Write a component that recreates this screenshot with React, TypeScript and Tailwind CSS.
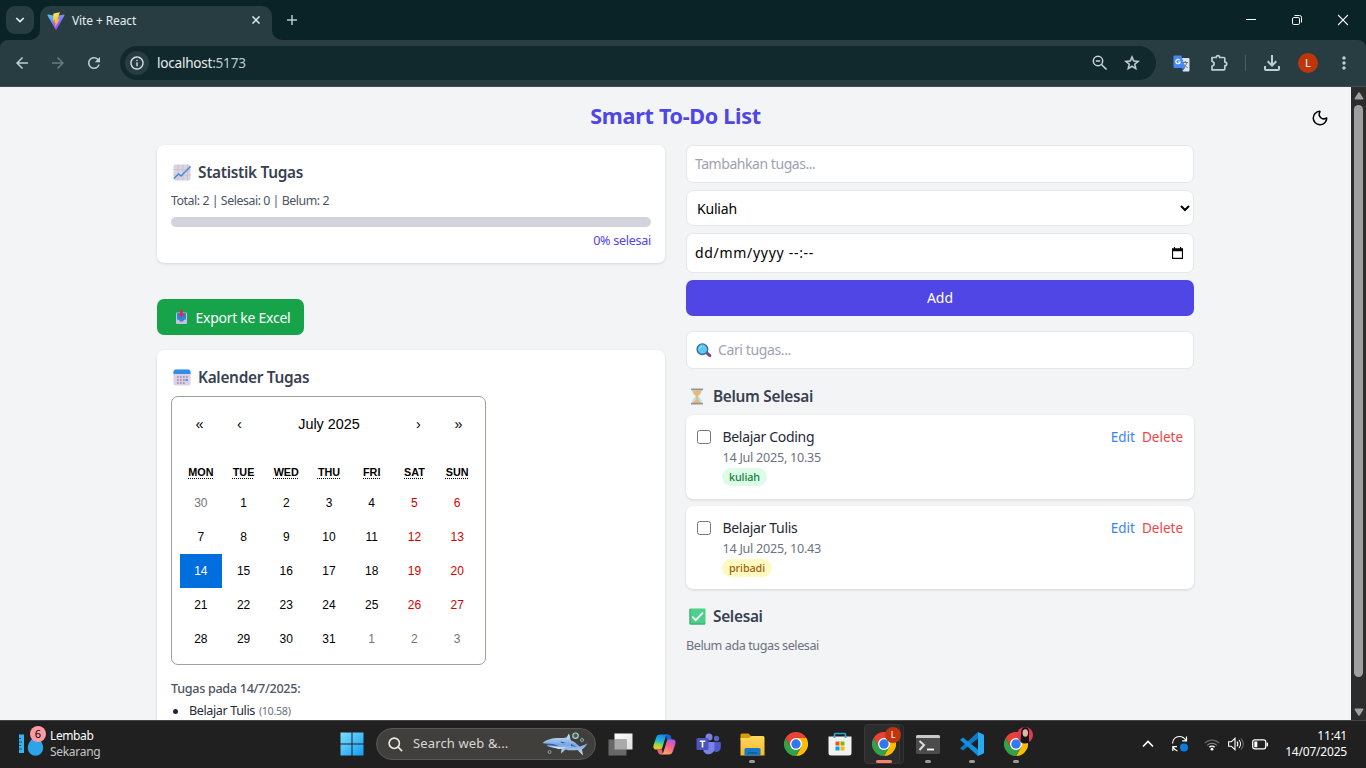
import React from "react";
import { Moon } from "lucide-react";
import {
  MdArrowBack,
  MdArrowForward,
  MdRefresh,
  MdInfoOutline,
  MdStarOutline,
  MdOutlineFileDownload,
  MdMoreVert,
} from "react-icons/md";

type Task = { title: string; when: string; tag: string; tagClass: string };

const tasks: Task[] = [
  { title: "Belajar Coding", when: "14 Jul 2025, 10.35", tag: "kuliah", tagClass: "bg-[#dcfce7] text-[#15803d]" },
  { title: "Belajar Tulis", when: "14 Jul 2025, 10.43", tag: "pribadi", tagClass: "bg-[#fef9c3] text-[#a16207]" },
];

const weekdays = ["Mon", "Tue", "Wed", "Thu", "Fri", "Sat", "Sun"];
const days = [30, ...Array.from({ length: 31 }, (_, i) => i + 1), 1, 2, 3];

function ViteLogo() {
  return (
    <svg width="18" height="18" viewBox="0 0 32 32">
      <defs>
        <linearGradient id="va" x1="0" y1="0" x2=".6" y2="1">
          <stop offset="0" stopColor="#41d1ff" />
          <stop offset="1" stopColor="#bd34fe" />
        </linearGradient>
        <linearGradient id="vb" x1=".4" y1="0" x2=".6" y2="1">
          <stop offset="0" stopColor="#ffea83" />
          <stop offset=".2" stopColor="#ffdd35" />
          <stop offset="1" stopColor="#ffa800" />
        </linearGradient>
      </defs>
      <path fill="url(#va)" d="M31 6 16.8 31a1 1 0 0 1-1.6 0L1 6a1 1 0 0 1 1-1.5L16 7l14-2.500A1 1 0 0 1 31 6Z" />
      <path fill="url(#vb)" d="M23 .5 11.500 2.500 10.500 15l3.500-.8-.9 5.800 2.400-.7-1.600 8.500 8.300-15-3.700.7Z" />
    </svg>
  );
}

function ZoomOutIcon() {
  return (
    <svg width="16" height="16" viewBox="0 0 16 16" fill="none" stroke="currentColor" strokeWidth="1.500">
      <circle cx="6" cy="6" r="4.700" />
      <path d="m9.500 9.500 5 5M3.800 6h4.400" />
    </svg>
  );
}

function PuzzleIcon() {
  return (
    <svg width="18" height="18" viewBox="0 0 18 18" fill="none" stroke="currentColor" strokeWidth="1.700" strokeLinejoin="round">
      <path d="M2 3.500h4.200c0-2.600 3.400-2.600 3.400 0H14a.8.8 0 0 1 .8.8v3.900c2.600 0 2.600 3.400 0 3.400V15a.8.8 0 0 1-.8.800H2v-3.700c2.800-.2 2.800-4.400 0-4.600Z" />
    </svg>
  );
}

function TranslateIcon() {
  return (
    <svg width="17" height="17" viewBox="0 0 17 17">
      <path fill="#dfe3e8" d="M7 3h8.500a1 1 0 0 1 1 1v11.500a1 1 0 0 1-1 1H10Z" />
      <path fill="none" stroke="#66757c" strokeWidth="1" d="M9.500 7.500h5.500M12.200 6v1.500M14 7.500c-.5 2-2 3.500-3.500 4.500M10.500 8.500c.5 1.500 2 3 4 4" />
      <path fill="#3367d6" d="m9 13 3 0-3 3.500Z" />
      <path fill="#4688f4" d="M1.500.5h6.800l4 12.500H1.500a1 1 0 0 1-1-1V1.500a1 1 0 0 1 1-1Z" />
      <path fill="none" stroke="#fff" strokeWidth="1.200" d="M6.800 5.200A2.200 2.200 0 1 0 7.200 7H5" />
    </svg>
  );
}

function ChromeLogo() {
  return (
    <svg width="24" height="24" viewBox="0 0 24 24">
      <path fill="#ea4335" d="M1.600 6A12 12 0 0 1 22.400 6H12L6.800 15Z" />
      <path fill="#fbbc04" d="M22.400 6A12 12 0 0 1 12 24l5.200-9L12 6Z" />
      <path fill="#34a048" d="M12 24A12 12 0 0 1 1.600 6l5.200 9h10.400Z" />
      <circle cx="12" cy="12" r="6" fill="#fff" />
      <circle cx="12" cy="12" r="4.700" fill="#3078ee" />
    </svg>
  );
}

function ChartEmoji() {
  return (
    <svg width="18" height="17" viewBox="0 0 18 17">
      <rect x=".5" y=".5" width="17" height="16" rx="1.800" fill="#dcd3e2" />
      <path stroke="#c8bed2" strokeWidth=".8" d="M.5 5.500h17M.5 11h17M5 .5v16M10 .5v16M14.500 .5v16" />
      <path fill="none" stroke="#3f8fdc" strokeWidth="1.500" d="m1 14.500 4.500-4.500 2.500 2 9.500-9.500" />
    </svg>
  );
}

function CalendarEmoji() {
  return (
    <svg width="18" height="17" viewBox="0 0 18 17">
      <rect x=".5" y=".5" width="17" height="16" rx="2.500" fill="#dccfe6" />
      <path fill="#2f8df0" d="M3 .5h12A2.500 2.500 0 0 1 17.500 3v2H.5V3A2.500 2.500 0 0 1 3 .5Z" />
      <path stroke="#9a8ba9" strokeWidth="1.600" strokeDasharray="1.700 1.300" d="M4 8h10.700M4 11h7.700M4 14h7.700" />
      <path fill="#3c8fea" d="M12.500 10h2.200v2h-2.200z" />
    </svg>
  );
}

function InboxEmoji() {
  return (
    <svg width="13" height="16" viewBox="0 0 13 16">
      <rect x="1" y="3.500" width="11" height="11.500" rx="1" fill="#cbbfdc" />
      <path fill="#2b86dd" d="M2 4h9v6.500l-2 .3-1 1.700H5l-1-1.700-2-.3Z" />
      <path fill="#e0254f" d="M5.200 .5h2.600v4.500h1.700L6.500 8.300 3.500 5h1.700Z" />
    </svg>
  );
}

function MagnifierEmoji() {
  return (
    <svg width="16" height="15" viewBox="0 0 16 15">
      <path stroke="#7b4a86" strokeWidth="3" strokeLinecap="round" d="m10.500 9.700 3.300 3" />
      <circle cx="6.400" cy="6.200" r="5.300" fill="#5ccbf0" stroke="#3b6d98" strokeWidth="1.400" />
      <path fill="none" stroke="#a5e6fa" strokeWidth="1" d="M3.500 6a3 3 0 0 1 2.500-2.800" />
    </svg>
  );
}

function HourglassEmoji() {
  return (
    <svg width="14" height="17" viewBox="0 0 14 17">
      <path fill="#b9dcee" d="M2.200 2h9.600c0 3-1 4.500-3.500 6.500 2.500 2 3.500 3.500 3.500 6.500H2.200c0-3 1-4.500 3.500-6.500C3.200 6.500 2.200 5 2.200 2Z" />
      <path fill="#f5b55b" d="M3.200 3h7.600C10.500 5.500 9 6.800 7.700 8v3.500l3.300 3.300H3l3.300-3.300V8C5 6.800 3.500 5.500 3.200 3Z" />
      <path fill="#9b9191" d="M1 .5h12v1.800H1zM1 14.700h12v1.800H1z" />
    </svg>
  );
}

function CheckEmoji() {
  return (
    <svg width="17" height="17" viewBox="0 0 17 17">
      <rect x=".5" y=".5" width="16" height="16" rx="1" fill="#4fd08a" />
      <path fill="none" stroke="#37a56c" strokeWidth="1" d="M1 1v15h15" />
      <path fill="none" stroke="#fff" strokeWidth="1.800" strokeLinecap="round" d="m3.800 9.200 2.900 3 6.800-7" />
    </svg>
  );
}

function Heading({ icon, children, className }: { icon: React.ReactNode; children: string; className: string }) {
  return (
    <h2 className={"flex items-center text-[15.400px] leading-[25px] font-semibold tracking-[-0.300px] text-[#374151] " + className}>
      {icon}
      <span>{children}</span>
    </h2>
  );
}

function TabStrip() {
  return (
    <div className="flex h-10 bg-[#0a2327]">
      <div className="flex w-10 pt-[6px] pl-[6px]">
        <div className="flex h-7 w-7 items-center justify-center rounded-[9px] bg-[#283d42]">
          <svg width="10" height="6" viewBox="0 0 10 6" fill="none" stroke="#e6eeee" strokeWidth="1.700">
            <path d="m1.300 1 3.700 3.500L8.700 1" />
          </svg>
        </div>
      </div>
      <div className="relative mt-[6px] flex h-[34px] w-[232px] items-center rounded-t-[10px] bg-[#283d42] pr-[12px] pl-[7px]">
        <svg className="absolute bottom-0 -left-[10px]" width="10" height="10"><path fill="#283d42" d="M10 0v10H0A10 10 0 0 0 10 0Z" /></svg>
        <svg className="absolute -right-[10px] bottom-0" width="10" height="10"><path fill="#283d42" d="M0 0v10h10A10 10 0 0 1 0 0Z" /></svg>
        <div className="-mt-[5px]"><ViteLogo /></div>
        <span className="-mt-[5px] ml-[7px] flex-1 text-[12px] tracking-[-0.12px] text-[#e3ecec]">Vite + React</span>
        <svg className="-mt-[6px]" width="8" height="8" viewBox="0 0 9 9" stroke="#e3ecec" strokeWidth="1.700"><path d="m.5.5 8 8M8.500.5l-8 8" /></svg>
      </div>
      <svg className="mt-[15px] ml-[15px]" width="10" height="10" viewBox="0 0 10 10" stroke="#b7cbce" strokeWidth="1.500"><path d="M5 0v10M0 5h10" /></svg>
      <div className="ml-auto flex items-start pt-[14px] pr-[18px]">
        <svg className="mr-[36px]" width="10" height="12" viewBox="0 0 10 12" stroke="#fff" strokeWidth="1"><path d="M0 5.500h10" /></svg>
        <svg className="mr-[36px]" width="10" height="12" viewBox="0 0 10 12" fill="none" stroke="#fff" strokeWidth="1">
          <rect x=".5" y="3.500" width="7" height="7" rx="1.300" />
          <path d="M2.500 1.500h5a2 2 0 0 1 2 2v5" />
        </svg>
        <svg width="10" height="12" viewBox="0 0 10 12" stroke="#fff" strokeWidth="1.100"><path d="m0 1 10 10M10 1 0 11" /></svg>
      </div>
    </div>
  );
}

function Toolbar() {
  return (
    <div className="bg-[#0a2327]">
      <div className="flex h-[47px] items-center rounded-t-[8px] border-b border-[#3c4f53] bg-[#283d42] text-[#b9d0d4]">
        <div className="flex w-[120px] items-center pl-[13px]">
          <MdArrowBack size={18} className="mr-[18px]" />
          <MdArrowForward size={18} className="mr-[18px] text-[#687b80]" />
          <MdRefresh size={18} />
        </div>
        <div className="flex h-[34px] w-[1036px] items-center rounded-full bg-[#11292d] pr-[15px] pl-[5px] text-[#c7d5d7]">
          <div className="flex h-6 w-6 items-center justify-center rounded-full bg-[#283d42] text-[#dbe6e8]">
            <MdInfoOutline size={16} />
          </div>
          <div className="ml-[8px] flex-1 text-[13.600px] tracking-[-0.25px] text-[#e5eeee]">
            localhost<span className="text-[#bccbce]">:5173</span>
          </div>
          <div className="mr-[15px]"><ZoomOutIcon /></div>
          <MdStarOutline size={18} stroke="currentColor" strokeWidth={0.5} />
        </div>
        <div className="flex flex-1 items-center pl-[17px]">
          <TranslateIcon />
          <div className="ml-[20px]"><PuzzleIcon /></div>
          <div className="ml-[17px] h-4 w-px bg-[#485f64]" />
          <MdOutlineFileDownload size={24} className="ml-[14px]" />
          <div className="ml-[14px] flex h-5 w-5 items-center justify-center rounded-full bg-[#bf360c] text-[11px] text-white">L</div>
          <MdMoreVert size={20} className="ml-[16px]" />
        </div>
      </div>
    </div>
  );
}

function Calendar() {
  return (
    <div className="h-[269px] w-[315px] rounded-[7px] border border-[#a0a096] bg-white pt-px pr-[6.500px] pl-[7.500px] font-['Liberation_Sans',Arial,sans-serif] text-black">
      <div className="flex h-[54px] items-center text-[14.400px]">
        <span className="w-[40px] text-center">«</span>
        <span className="w-[40px] text-center">‹</span>
        <span className="flex-1 text-center">July 2025</span>
        <span className="w-[40px] text-center">›</span>
        <span className="w-[40px] text-center">»</span>
      </div>
      <div className="mt-[6px] grid h-[28px] grid-cols-7 items-center text-center text-[10.800px] font-bold uppercase">
        {weekdays.map((d) => (
          <div key={d}>
            <abbr title={d} className="underline decoration-dotted underline-offset-2">{d}</abbr>
          </div>
        ))}
      </div>
      <div className="grid grid-cols-7 text-center text-[12px] leading-[34px]">
        {days.map((d, i) => {
          const outside = i === 0 || i > 31;
          const color = i === 14 ? "bg-[#006edc] text-white" : outside ? "text-[#757575]" : i % 7 > 4 ? "text-[#d10000]" : "text-black";
          return <div key={i} className={"h-[34px] " + color}>{d}</div>;
        })}
      </div>
    </div>
  );
}

function TaskCard({ task }: { task: Task }) {
  return (
    <div className="mb-[7px] flex h-[83.500px] rounded-[7px] bg-white px-[11px] pt-[11px] shadow-[0_1px_3px_rgba(0,0,0,0.12)]">
      <div className="mt-[4px] h-[14px] w-[14px] rounded-[2.500px] border border-[#767676]" />
      <div className="ml-[11.500px] flex-1">
        <div className="text-[14px] leading-[22px] tracking-[-0.320px] text-[#1f2937]">{task.title}</div>
        <div className="text-[12.600px] leading-[19px] tracking-[-0.26px] text-[#6b7280]">{task.when}</div>
        <div className={"mt-[1px] -ml-[0.500px] block h-[18px] w-fit rounded-full px-[7px] text-[10.800px] leading-[18px] font-medium tracking-[-0.1px] " + task.tagClass}>{task.tag}</div>
      </div>
      <div className="flex gap-[7px] text-[13.500px] leading-[22px]">
        <span className="text-[#3b82f6]">Edit</span>
        <span className="text-[#ef4444]">Delete</span>
      </div>
    </div>
  );
}

function Page() {
  return (
    <div className="flex h-[633px] overflow-hidden bg-[#f3f4f6]">
      <div className="relative h-full w-[1351px]">
        <h1 className="h-[58px] pt-[13px] text-center text-[21.600px] leading-[32px] font-bold tracking-[-0.320px] text-[#4f46e5]">Smart To-Do List</h1>
        <Moon className="absolute top-[22px] right-[22px] text-black" size={18} strokeWidth={2} />
        <div className="flex justify-between pr-[157px] pl-[157px]">
          <div className="w-[508px]">
            <div className="h-[118px] rounded-[7px] bg-white px-[14px] pt-[15px] shadow-[0_1px_3px_rgba(0,0,0,0.12)]">
              <Heading className="gap-[7px] pl-[2px]" icon={<ChartEmoji />}>Statistik Tugas</Heading>
              <div className="mt-[7px] text-[12.400px] leading-[18px] tracking-[-0.470px] text-[#4b5563]">Total: 2 | Selesai: 0 | Belum: 2</div>
              <div className="mt-[7px] h-[10px] rounded-full bg-[#d1d5db]" />
              <div className="mt-[5px] text-right text-[12.600px] leading-[18px] tracking-[-0.300px] text-[#4f46e5]">0% selesai</div>
            </div>
            <button className="mt-[36px] flex h-9 w-[147px] items-center rounded-[7px] bg-[#16a34a] pl-[18px] text-[14px] tracking-[-0.270px] text-white">
              <InboxEmoji />
              <span className="ml-[7.500px] pt-px whitespace-nowrap">Export ke Excel</span>
            </button>
            <div className="mt-[15px] h-[420px] rounded-[7px] bg-white px-[14px] pt-[15px] shadow-[0_1px_3px_rgba(0,0,0,0.12)]">
              <Heading className="mb-[6px] gap-[7px] pl-[2px]" icon={<CalendarEmoji />}>Kalender Tugas</Heading>
              <Calendar />
              <div className="mt-[14px] text-[12.600px] leading-[20px] font-medium tracking-[-0.300px] text-[#4b5563]">Tugas pada 14/7/2025:</div>
              <ul className="mt-[1px] flex items-center text-[12.600px] leading-[22px] text-[#1f2937]">
                <li className="flex items-center">
                  <span className="mr-[11px] ml-[2px] h-[5px] w-[5px] rounded-full bg-[#1f2937]" />
                  <span className="tracking-[-0.400px]">Belajar Tulis</span>
                  <span className="ml-[4px] text-[10.800px] tracking-[-0.350px] text-[#6b7280]">(10.58)</span>
                </li>
              </ul>
            </div>
          </div>
          <div className="w-[508px] text-[14px]">
            <div className="flex h-[38px] items-center rounded-[7px] border border-[#e5e7eb] bg-white px-[8px] tracking-[-0.450px] text-[#9ca3af]"><span className="pb-px">Tambahkan tugas...</span></div>
            <select defaultValue="Kuliah" className="mt-[7px] block h-9 w-full rounded-[7px] border border-[#e5e7eb] bg-white px-[6px] pt-px tracking-[-0.200px] text-black">
              <option>Kuliah</option>
            </select>
            <div className="mt-[7px] flex h-[40px] items-center justify-between rounded-[7px] border border-[#e5e7eb] bg-white pr-[10px] pl-[8px] text-black">
              <span className="pb-px tracking-[0.700px]">dd/mm/yyyy --:--</span>
              <svg width="11" height="12" viewBox="0 0 12 13"><path fillRule="evenodd" d="M2 0h1.300v1.300h5.400V0H10v1.300h2V13H0V1.300h2ZM1.200 4.500v7.300h9.600V4.500Z" /></svg>
            </div>
            <div className="mt-[7px] flex h-9 items-center justify-center rounded-[7px] bg-[#4f46e5] pb-px text-white">Add</div>
            <div className="mt-[15px] flex h-[38px] items-center rounded-[7px] border border-[#e5e7eb] bg-white pl-[9px] tracking-[-0.380px] text-[#9ca3af]">
              <MagnifierEmoji />
              <span className="ml-[6px] pb-px">Cari tugas...</span>
            </div>
            <Heading className="mt-[15px] mb-[6px] gap-[9px] pl-[4px]" icon={<HourglassEmoji />}>Belum Selesai</Heading>
            {tasks.map((t) => <TaskCard key={t.title} task={t} />)}
            <Heading className="mt-[15px] gap-[7px] pl-[3px]" icon={<CheckEmoji />}>Selesai</Heading>
            <div className="mt-[7px] text-[12.600px] leading-[20px] tracking-[-0.430px] text-[#6b7280]">Belum ada tugas selesai</div>
          </div>
        </div>
      </div>
      <div className="flex h-full w-[15px] flex-col items-center bg-[#2c2c2c]">
        <svg className="mt-[5px]" width="10" height="8" viewBox="0 0 10 8" fill="#9f9f9f"><path d="M4.200.8a1 1 0 0 1 1.600 0L9.500 6.500 9 7.500H1l-.5-1Z" /></svg>
        <div className="mt-[5px] h-[572px] w-[9px] rounded-full bg-[#9f9f9f]" />
        <svg className="mt-auto mb-[4px]" width="10" height="8" viewBox="0 0 10 8" fill="#9f9f9f"><path d="M4.200 7.200a1 1 0 0 0 1.600 0L9.500 1.500 9 .5H1l-.5 1Z" /></svg>
      </div>
    </div>
  );
}

function Shark() {
  return (
    <svg width="46" height="24" viewBox="0 0 46 24">
      <defs>
        <linearGradient id="sh" x1="0" y1="0" x2="0" y2="1">
          <stop offset="0" stopColor="#d5eafc" />
          <stop offset=".5" stopColor="#7ba7e0" />
          <stop offset="1" stopColor="#cfdcf5" />
        </linearGradient>
      </defs>
      <path fill="url(#sh)" d="M.5 11c3-3 9-5 17-5 3 0 5 0 7-.5L27 1.500c1 2 1 5 2 7 4 1 7 5 9 6l7.500-3c-2 3-3 4-5.500 6l1 6-5.500-5.500c-5 .5-9 .5-12-.5l-4.500 4 .5-5c-6 0-12-1-15-3l4-.5Z" />
      <path fill="#335f9c" d="m2 11.300 9 .7 6 2-8-.5ZM18 9.500l6 1-4 .8ZM29 12l6 3-6-1Z" />
      <path fill="#eaf7ff" d="m7 14 10 1.500h8L17 17Z" />
      <circle cx="33.500" cy="3.700" r="2.700" fill="#465a68" stroke="#a9d4c5" strokeWidth="1.200" />
      <circle cx="40" cy="8" r="1.500" fill="none" stroke="#79b3b5" />
      <circle cx="7.500" cy="20" r="1.500" fill="none" stroke="#72aba6" />
    </svg>
  );
}

function TaskView() {
  return (
    <svg width="25" height="23" viewBox="0 0 25 23">
      <defs><linearGradient id="tv" x1="0" y1="0" x2="1" y2="1"><stop offset="0" stopColor="#fff" /><stop offset="1" stopColor="#dcdcdc" /></linearGradient></defs>
      <path fill="url(#tv)" d="M6.500.5h18v16h-18z" />
      <path fill="#686868" d="M.5 6.500h18v16H.5z" />
      <path fill="#a9a9a9" d="M6.500 6.500h12v10h-12z" />
    </svg>
  );
}

function Copilot() {
  return (
    <svg width="23" height="21" viewBox="0 0 23 21">
      <defs>
        <linearGradient id="ca" x1=".5" y1="0" x2=".3" y2="1"><stop offset="0" stopColor="#1388e8" /><stop offset=".45" stopColor="#24bcd2" /><stop offset=".7" stopColor="#9dd64b" /><stop offset="1" stopColor="#ffc60b" /></linearGradient>
        <linearGradient id="cb" x1=".8" y1="0" x2=".3" y2="1"><stop offset="0" stopColor="#a95be4" /><stop offset=".45" stopColor="#f45f8e" /><stop offset="1" stopColor="#ffad58" /></linearGradient>
      </defs>
      <path fill="#1766cf" d="M13 .5h2.500c1.500 0 2 1 2.500 2.500l1 3h-5Z" />
      <path fill="url(#ca)" d="M7 .5h8c-1.500 0-2 1-2.500 2.500L9.500 13c-.5 1.700-1 2.500-2.700 2.500H3C.5 15.500 0 13 .8 10.500L3 4C3.800 1.500 5 .5 7 .5Z" />
      <path fill="#e9617c" d="M10 20.500H7.500C6 20.500 5.500 19.500 5 18l-1-2.500h5Z" />
      <path fill="url(#cb)" d="M16 20.500H8c1.500 0 2-1 2.500-2.500l3-10c.5-1.700 1-2.500 2.700-2.500H20c2.500 0 3 2.500 2.200 5L20 17c-.8 2.500-2 3.500-4 3.500Z" />
    </svg>
  );
}

function Teams() {
  return (
    <svg width="25" height="22" viewBox="0 0 25 22">
      <circle cx="20.500" cy="5.500" r="2.700" fill="#5b62c8" />
      <circle cx="13" cy="4" r="3.500" fill="#7b83eb" />
      <path fill="#5059c9" d="M16 9h8a.8.8 0 0 1 .8.8v5a4.300 4.300 0 0 1-7 3.200Z" />
      <path fill="#7b83eb" d="M8 9h10.500v6.500a6 6 0 0 1-11 3Z" />
      <rect x=".5" y="5" width="12" height="12" rx="1.200" fill="#4b53bc" />
      <path stroke="#fff" strokeWidth="1.600" d="M3.700 8.200h5.600M6.500 8.200v6.300" />
    </svg>
  );
}

function Explorer() {
  return (
    <svg width="25" height="23" viewBox="0 0 25 23">
      <defs><linearGradient id="ex" x1="0" y1="0" x2="0" y2="1"><stop offset="0" stopColor="#ffd75e" /><stop offset="1" stopColor="#fbb829" /></linearGradient></defs>
      <path fill="#d99a0b" d="M.5 2A1.500 1.500 0 0 1 2 .5h6.500L11 3v4H.5Z" />
      <path fill="url(#ex)" d="M.5 5H9l2.500-2H23a1.500 1.500 0 0 1 1.500 1.500v18H.5Z" />
      <path fill="#1579c6" d="M4.500 22.500v-6a1.500 1.500 0 0 1 1.500-1.500h13a1.500 1.500 0 0 1 1.500 1.500v6Z" />
      <path fill="#0d5f9f" d="M8 19h9v1.500H8z" />
    </svg>
  );
}

function Store() {
  return (
    <svg width="24" height="24" viewBox="0 0 24 24">
      <path fill="#f2f2f2" d="M.5 4.500h23V21a2.500 2.500 0 0 1-2.500 2.500H3A2.500 2.500 0 0 1 .5 21Z" />
      <path fill="none" stroke="#2aa6d8" strokeWidth="1.700" d="M6.500 6V2.500a1 1 0 0 1 1-1h9a1 1 0 0 1 1 1V6" />
      <path fill="#f25022" d="M7.500 9.500h4v4h-4z" />
      <path fill="#7fba00" d="M12.500 9.500h4v4h-4z" />
      <path fill="#00a4ef" d="M7.500 14.500h4v4h-4z" />
      <path fill="#ffb900" d="M12.500 14.500h4v4h-4z" />
    </svg>
  );
}

function Terminal() {
  return (
    <svg width="24" height="19" viewBox="0 0 24 19">
      <rect width="24" height="19" rx="1.500" fill="#4b4b4b" />
      <path fill="#c9c9c9" d="M1.500 0h21A1.500 1.500 0 0 1 24 1.500V3H0V1.500A1.500 1.500 0 0 1 1.500 0Z" />
      <path fill="none" stroke="#ddd" strokeWidth="2" d="m3.500 6 4.500 4-4.500 5" />
      <path stroke="#fff" strokeWidth="1.800" d="M11 14.500h7" />
    </svg>
  );
}

function VsCode() {
  return (
    <svg width="24" height="24" viewBox="0 0 24 24">
      <path fill="#0f78c4" d="M18 0v6.500L3 18.500.8 17a1 1 0 0 1 0-1.600Z" />
      <path fill="#128fdd" d="m.8 7 2.200-1.500L18 17.500V24L.8 8.500A1 1 0 0 1 .8 7Z" />
      <path fill="#2aa9f3" d="m18 0 5 2.300a1.600 1.600 0 0 1 1 1.500v16.400a1.600 1.600 0 0 1-1 1.500L18 24Z" />
    </svg>
  );
}

function AppCell({ children, running, active }: { children: React.ReactNode; running?: boolean; active?: boolean }) {
  return (
    <div className="relative flex h-full w-11 items-center justify-center pb-px">
      {active && (
        <>
          <div className="absolute top-[3px] left-[6px] h-[40px] w-[36px] rounded-[4px] border border-[#333] bg-[#262626]" />
          <div className="absolute top-[3px] left-[2px] h-[40px] w-[36px] rounded-[4px] border border-[#383838] bg-[#2c2c2c]" />
        </>
      )}
      <div className="relative">{children}</div>
      {active && <div className="absolute bottom-[5px] left-[14px] h-[3px] w-4 rounded-full bg-[#f98267]" />}
      {running && <div className="absolute bottom-[5px] left-[19px] h-[3px] w-[6px] rounded-full bg-[#9a9a9a]" />}
    </div>
  );
}

function Taskbar() {
  return (
    <div className="flex h-12 items-center border-t border-[#474747] bg-[#202020] text-[12px] text-white">
      <div className="relative flex h-full w-[329px] items-center pl-[18px]">
        <svg width="26" height="31" viewBox="0 0 26 31">
          <path fill="#35b6ee" d="M1 5.500h5V24H1z" />
          <path stroke="#14567f" d="M1 9.500h2M1 13h3M1 16.500h2M1 20h3" />
          <path fill="#2ba4e8" d="M17.500 6c4 4 7.700 7.500 7.700 13a7.700 7.700 0 0 1-15.400 0c0-5 4-9 7.700-13Z" />
        </svg>
        <div className="absolute top-[5px] left-[30px] flex h-4 w-4 items-center justify-center rounded-full bg-[#ff99a4] text-[11px] text-black">6</div>
        <div className="ml-[6px] pb-px leading-[16px]">
          <div className="tracking-[-0.400px]">Lembab</div>
          <div className="tracking-[-0.300px] text-[#c6c6c6]">Sekarang</div>
        </div>
      </div>
      <AppCell>
        <svg className="ml-px" width="24" height="24" viewBox="0 0 24 24">
          <defs><linearGradient id="wn" x1="0" y1="0" x2="1" y2="1"><stop offset="0" stopColor="#7be0fc" /><stop offset="1" stopColor="#149cf5" /></linearGradient></defs>
          <path fill="url(#wn)" d="M.5.5h11v11H.5zM12.500.5h11v11h-11zM.5 12.500h11v11H.5zM12.500 12.500h11v11h-11z" />
        </svg>
      </AppCell>
      <div className="mr-[2px] -mt-px ml-[3px] flex h-8 w-[220px] items-center rounded-full border border-[#5a5855] bg-[#413f3c] pr-[7px] pl-[11px]">
        <svg width="15" height="15" viewBox="0 0 16 16" fill="none" stroke="#ececec" strokeWidth="1.700"><circle cx="6.700" cy="6.700" r="5.500" /><path d="m10.700 10.700 4.300 4.300" /></svg>
        <span className="ml-[10px] flex-1 text-[13px] tracking-[0.130px] whitespace-nowrap text-[#d8d7d6]">Search web &amp;...</span>
        <Shark />
      </div>
      <AppCell><TaskView /></AppCell>
      <AppCell><Copilot /></AppCell>
      <AppCell><Teams /></AppCell>
      <AppCell running><Explorer /></AppCell>
      <AppCell><ChromeLogo /></AppCell>
      <AppCell><Store /></AppCell>
      <AppCell active>
        <ChromeLogo />
        <div className="absolute -top-[5px] left-[13px] flex h-4 w-4 items-center justify-center rounded-full bg-[#bf360c] text-[9px]">L</div>
      </AppCell>
      <AppCell running><Terminal /></AppCell>
      <AppCell running><VsCode /></AppCell>
      <AppCell running>
        <ChromeLogo />
        <svg className="absolute -top-[5px] left-[13px]" width="16" height="17" viewBox="0 0 16 17">
          <circle cx="8" cy="8" r="8" fill="#e03a52" />
          <path fill="#15151b" d="M8 .3c4 0 4.500 3.500 4 7L12 15.500a8 8 0 0 1-8.500-.5L4.200 5C4.500 2.300 5.500.3 8 .3Z" />
          <ellipse cx="8.300" cy="6" rx="2.700" ry="3.700" fill="#e0b9a3" />
        </svg>
      </AppCell>
      <div className="ml-auto flex items-center pr-[19px] pb-px">
        <svg width="12" height="8" viewBox="0 0 12 8" fill="none" stroke="#fff" strokeWidth="1.600"><path d="m1 6.500 5-5 5 5" /></svg>
        <svg className="ml-[17px]" width="18" height="18" viewBox="0 0 18 18" fill="none" stroke="#fff" strokeWidth="1.200">
          <path d="M1.500 8.500C2 4 5 1.500 8.500 1.500c3 0 5 1.500 6.500 4M15.500 1.500v4.300h-4.300M6.500 16C4.500 15.500 3 14 2 12M1.800 16v-4.300H6" />
          <circle cx="13" cy="12.500" r="4" fill="#0a7be0" stroke="none" />
        </svg>
        <svg className="ml-[15px]" width="16" height="13" viewBox="0 0 16 13" fill="none" stroke="#666" strokeWidth="1.200">
          <path d="M1 5a9.800 9.800 0 0 1 14 0" />
          <path stroke="#888" d="M3.200 7.300a6.700 6.700 0 0 1 9.600 0" />
          <path stroke="#fff" strokeWidth="1.400" d="M5.300 9.300a3.800 3.800 0 0 1 5.400 0" />
          <circle cx="8" cy="11.200" r="1.400" fill="#fff" stroke="none" />
        </svg>
        <svg className="ml-[8px]" width="16" height="14" viewBox="0 0 16 14" fill="none" stroke="#fff" strokeWidth="1.100">
          <path d="M.6 4.800h2.700L7 1.300v11.400L3.300 9.200H.6ZM9 4.700c1 1.300 1 3.300 0 4.600M11 3c2 2.300 2 5.700 0 8" />
          <path stroke="#777" d="M13 1.500c3 3.300 3 7.700 0 11" />
        </svg>
        <svg className="ml-[8px]" width="17" height="11" viewBox="0 0 17 11" fill="none" stroke="#fff" strokeWidth="1.200">
          <rect x=".7" y=".8" width="13" height="9" rx="2" />
          <path fill="#fff" stroke="none" d="M2.300 2.500h3v5.700h-3zM14.500 3.500h1c.8 0 .8 4 0 4h-1z" />
        </svg>
        <div className="w-[78px] text-right text-[12px] leading-[16px] tracking-[-0.200px] whitespace-nowrap">
          <div>11:41</div>
          <div>14/07/2025</div>
        </div>
      </div>
    </div>
  );
}

export default function App() {
  return (
    <div className="h-[768px] w-[1366px] overflow-hidden font-['Noto_Sans','Open_Sans',sans-serif]">
      <TabStrip />
      <Toolbar />
      <Page />
      <Taskbar />
    </div>
  );
}
